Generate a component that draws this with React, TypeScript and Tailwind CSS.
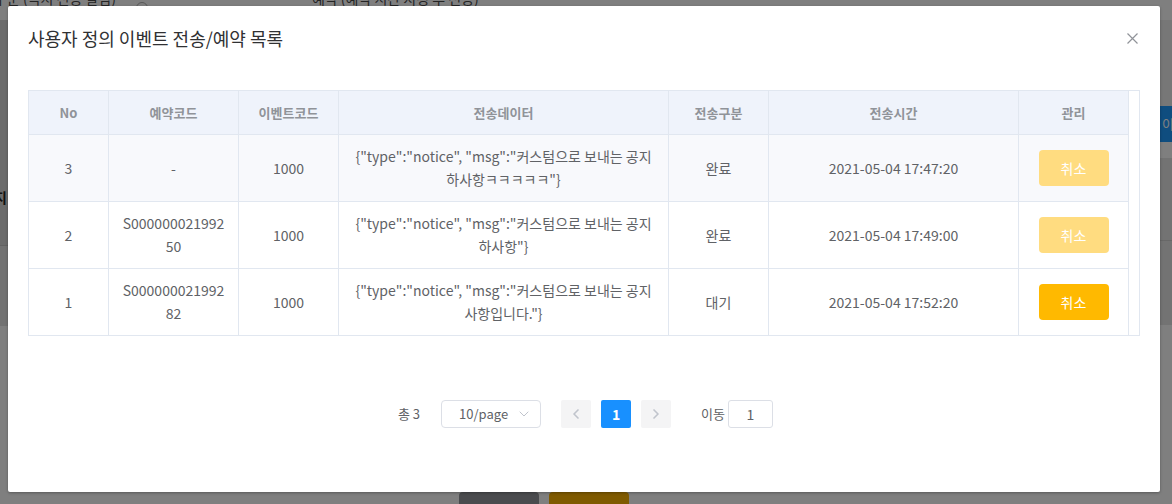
import { ChevronDown, ChevronLeft, ChevronRight } from "lucide-react";

type Row = {
  no: number;
  code: string[];
  event: string;
  data: string[];
  kind: string;
  time: string;
  active: boolean;
};

const rows: Row[] = [
  {
    no: 3,
    code: ["-"],
    event: "1000",
    data: ['{"type":"notice", "msg":"커스텀으로 보내는 공지', '하사항ㅋㅋㅋㅋㅋ"}'],
    kind: "완료",
    time: "2021-05-04 17:47:20",
    active: false,
  },
  {
    no: 2,
    code: ["S000000021992", "50"],
    event: "1000",
    data: ['{"type":"notice", "msg":"커스텀으로 보내는 공지', '하사항"}'],
    kind: "완료",
    time: "2021-05-04 17:49:00",
    active: false,
  },
  {
    no: 1,
    code: ["S000000021992", "82"],
    event: "1000",
    data: ['{"type":"notice", "msg":"커스텀으로 보내는 공지', '사항입니다."}'],
    kind: "대기",
    time: "2021-05-04 17:52:20",
    active: true,
  },
];

const headers = ["No", "예약코드", "이벤트코드", "전송데이터", "전송구분", "전송시간", "관리"];

const cols = "grid grid-cols-[80px_130px_100px_330px_100px_250px_110px]";
const cell =
  "flex flex-col items-center justify-center px-[10px] text-center border-r border-[#e1e7f0]";

function Background() {
  return (
    <div className="flex flex-col w-[1172px] h-[504px] bg-white">
      {/* text row cut off at the top */}
      <div className="flex items-end h-[6px] overflow-hidden text-[14px] leading-[16px] text-[#4a4a4a]">
        <span className="ml-[-6px]">구분 (즉시 전송 알림)</span>
        <span className="ml-[20px] w-[12px] h-[12px] rounded-full border border-[#b0b0b0] mb-[-8px]" />
        <span className="ml-[164px] w-[340px]">예약 (예약 시간 지정 후 전송)</span>
      </div>
      <div className="flex flex-1">
        <div className="flex flex-col w-[8px]">
          <div className="h-[14px]" />
          <div className="h-[225px] bg-[#d6d6d6] flex items-center text-[14px] font-bold text-[#222] overflow-hidden">
            <span className="ml-[-6px] mt-[130px]">지</span>
          </div>
          <div className="h-[1px] bg-[#c4c4c4]" />
          <div className="h-[80px] bg-[#e4e4e4]" />
        </div>
        <div className="flex-1" />
        <div className="flex flex-col w-[12px]">
          <div className="h-[14px]" />
          <div className="h-[86px] bg-[#efefef]" />
          <div className="h-[36px] bg-[#1e9bff] text-white text-[13px] leading-[36px] overflow-hidden">
            <span className="ml-[2px]">이벤</span>
          </div>
          <div className="h-[16px] bg-white" />
          <div className="h-[82px] bg-[#e6e6e6]" />
          <div className="h-[1px] bg-[#d0d0d0]" />
          <div className="h-[84px] bg-[#e6e6e6]" />
        </div>
      </div>
      <div className="flex items-end h-[12px]">
        <div className="ml-[459px] w-[80px] h-[12px] rounded-t-[4px] bg-[#94969c]" />
        <div className="ml-[10px] w-[80px] h-[12px] rounded-t-[4px] bg-[#ffb400]" />
      </div>
    </div>
  );
}

function CancelButton({ active }: { active: boolean }) {
  return (
    <button
      className={
        active
          ? "w-[70px] h-[36px] rounded-[4px] bg-[#ffb900] text-white text-[14px]"
          : "w-[70px] h-[36px] rounded-[4px] bg-[#ffdc80] text-white text-[14px]"
      }
    >
      취소
    </button>
  );
}

function EventTable() {
  return (
    <div className="flex border border-[#e1e7f0] text-[14px] leading-[23px] text-[#606266]">
      <div className="flex flex-col w-[1100px]">
        <div className={`${cols} h-[44px] bg-[#eff3fb] border-b border-[#e1e7f0]`}>
          {headers.map((h) => (
            <div key={h} className={`${cell} text-[13px] font-bold text-[#909399]`}>
              {h}
            </div>
          ))}
        </div>
        {rows.map((r, i) => (
          <div
            key={r.no}
            className={`${cols} ${i === 0 ? "bg-[#f8f9fc]" : "bg-white"} ${
              i < rows.length - 1 ? "h-[67px] border-b border-[#e1e7f0]" : "h-[66px]"
            }`}
          >
            <div className={cell}>{r.no}</div>
            <div className={cell}>
              {r.code.map((c) => (
                <span key={c}>{c}</span>
              ))}
            </div>
            <div className={cell}>{r.event}</div>
            <div className={cell}>
              {r.data.map((d) => (
                <span key={d} className="whitespace-nowrap">
                  {d}
                </span>
              ))}
            </div>
            <div className={cell}>{r.kind}</div>
            <div className={cell}>{r.time}</div>
            <div className={cell}>
              <CancelButton active={r.active} />
            </div>
          </div>
        ))}
      </div>
      <div className="w-[11px] bg-white" />
    </div>
  );
}

function Pagination() {
  return (
    <div className="flex items-center justify-center h-[28px] pl-[3px] text-[13px] text-[#606266]">
      <span>총 3</span>
      <div className="ml-[21px] flex items-center w-[100px] h-[28px] rounded-[4px] border border-[#dcdfe6] pl-[17px] pr-[8px]">
        <span className="flex-1">10/page</span>
        <ChevronDown size={16} strokeWidth={1.5} className="text-[#c0c4cc]" />
      </div>
      <button className="ml-[20px] flex items-center justify-center w-[30px] h-[28px] rounded-[2px] bg-[#f4f4f5] text-[#c0c4cc]">
        <ChevronLeft size={16} strokeWidth={2.5} />
      </button>
      <button className="ml-[10px] w-[30px] h-[28px] rounded-[2px] bg-[#1890ff] text-white font-bold text-[14px]">
        1
      </button>
      <button className="ml-[10px] flex items-center justify-center w-[30px] h-[28px] rounded-[2px] bg-[#f4f4f5] text-[#c0c4cc]">
        <ChevronRight size={16} strokeWidth={2.5} />
      </button>
      <span className="ml-[30px]">이동</span>
      <div className="ml-[3px] flex items-center justify-center w-[45px] h-[28px] rounded-[3px] border border-[#dcdfe6] text-[14px]">
        1
      </div>
    </div>
  );
}

export default function App() {
  return (
    <div className="relative w-[1172px] h-[504px] overflow-hidden font-['Noto_Sans_CJK_KR','Noto_Sans',sans-serif]">
      <Background />
      <div className="absolute inset-0 bg-black/50">
        <div className="ml-[8px] mt-[6px] w-[1152px] bg-white rounded-[2px] shadow-[0_1px_3px_rgba(0,0,0,0.3)]">
          <div className="flex items-center justify-between pt-[20px] pb-[10px] px-[20px]">
            <h2 className="text-[18px] leading-[24px] text-[#303133]">사용자 정의 이벤트 전송/예약 목록</h2>
            <button aria-label="닫기" className="w-[16px] h-[16px] flex items-center justify-center">
              <svg width="11" height="11" viewBox="0 0 11 11">
                <path d="M0.5 0.5 L10.5 10.5 M10.5 0.5 L0.5 10.5" stroke="#909399" strokeWidth="1.2" fill="none" />
              </svg>
            </button>
          </div>
          <div className="pt-[30px] px-[20px] pb-[64px]">
            <EventTable />
            <div className="mt-[64px]">
              <Pagination />
            </div>
          </div>
        </div>
      </div>
    </div>
  );
}
